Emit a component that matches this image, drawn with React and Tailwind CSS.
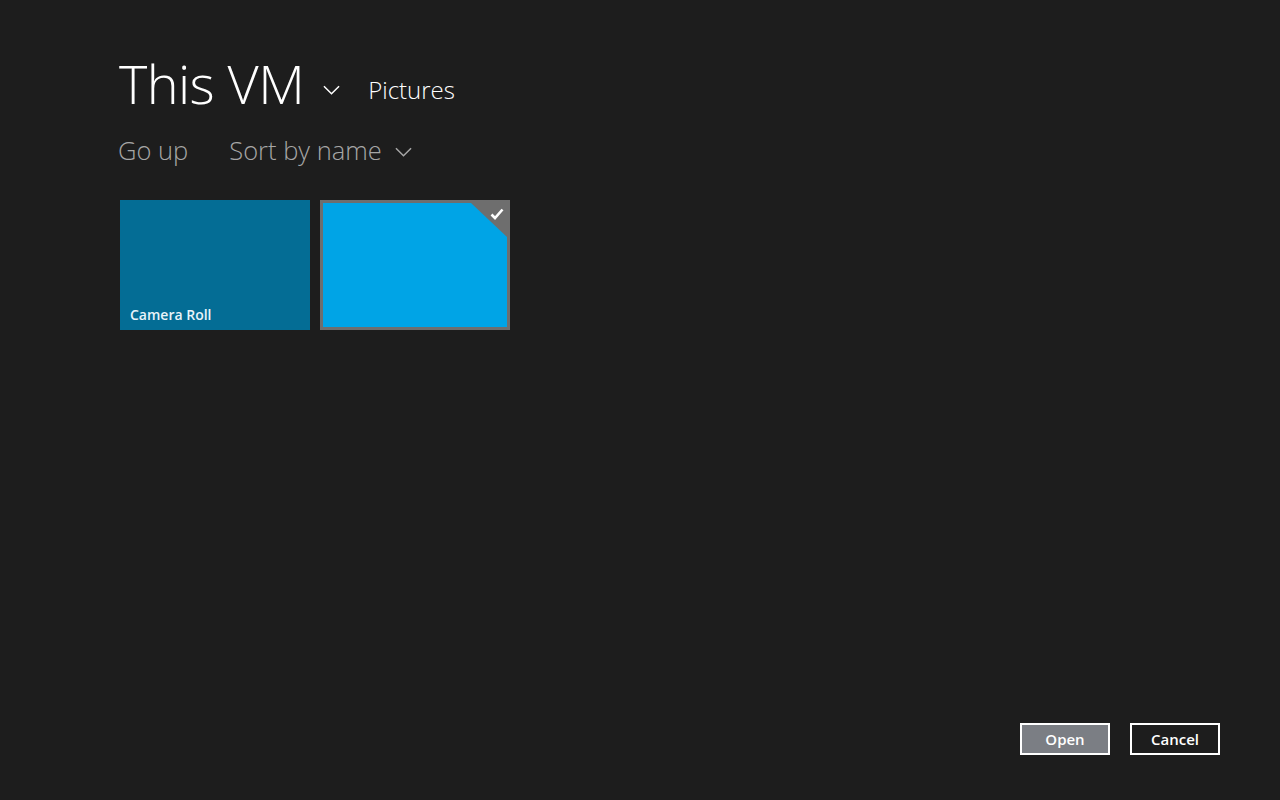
import React from 'react';

const Chevron = ({ className }) => (
  <svg className={className} viewBox="0 0 18 10" fill="none" stroke="currentColor" strokeWidth="1.6">
    <path d="M1 1l8 8 8-8" />
  </svg>
);

const App = () => {
  return (
    <div className="w-[1280px] h-[800px] bg-[#1d1d1d] text-white flex flex-col overflow-hidden" style={{ fontFamily: '"Open Sans", "Noto Sans", sans-serif' }}>
      <div className="pl-[119px] pt-[47px] flex items-end">
        <h1 className="text-[54px] leading-[72px] font-light tracking-[-0.6px]">This VM</h1>
        <Chevron className="w-[17px] h-[10px] ml-[19px] mb-[24px] text-white" />
        <span className="ml-[28px] mb-[14px] text-[24px] leading-[30px] font-light">Pictures</span>
      </div>

      <div className="pl-[118px] mt-[14px] flex items-center text-[25.5px] leading-[34px] font-light text-[#a6a6a6]">
        <span>Go up</span>
        <span className="ml-[41px]">Sort by name</span>
        <Chevron className="w-[17px] h-[10px] ml-[13px] mt-[4px]" />
      </div>

      <div className="pl-[120px] mt-[33px] flex gap-[10px]">
        <div className="w-[190px] h-[130px] bg-[#046d95] flex items-end px-[10px] pb-[5px]">
          <span className="text-[14px] font-semibold text-[#e8f4fa]">Camera Roll</span>
        </div>
        <div className="relative w-[190px] h-[130px] bg-[#6e6e6e] p-[3px]">
          <div className="w-full h-full bg-[#00a4e6] [clip-path:polygon(0_0,calc(100%-36px)_0,100%_34px,100%_100%,0_100%)]" />
          <svg className="absolute top-[8px] right-[6px] w-[14px] h-[12px]" viewBox="0 0 14 12" fill="none" stroke="white" strokeWidth="2.6">
            <path d="M1.5 6.5l3.5 3.5 7.5-8.5" />
          </svg>
        </div>
      </div>

      <div className="mt-auto mb-[45px] pr-[60px] flex justify-end gap-[20px]">
        <button className="w-[90px] h-[32px] border-2 border-white bg-[#7b7e84] text-[15px] font-semibold text-white">Open</button>
        <button className="w-[90px] h-[32px] border-2 border-white bg-[#1d1d1d] text-[15px] font-semibold text-white">Cancel</button>
      </div>
    </div>
  );
};

export default App;
